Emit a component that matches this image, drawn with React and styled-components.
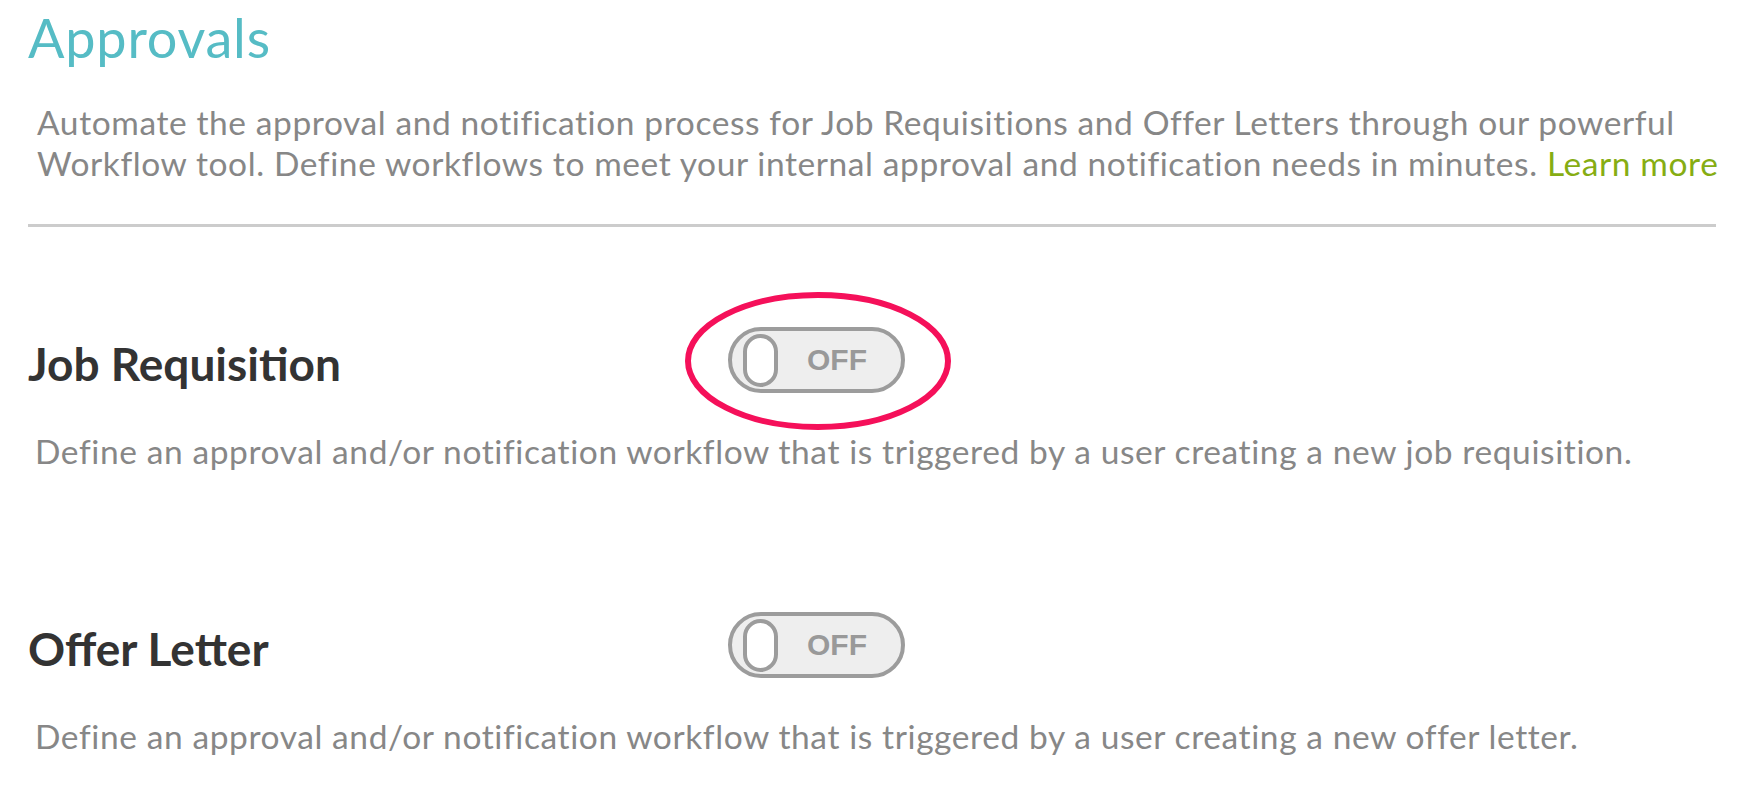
import React from 'react'
import styled, { createGlobalStyle } from 'styled-components'

const GlobalStyle = createGlobalStyle`
  body {
    margin: 0;
    background: #fff;
    font-family: Lato, "Open Sans", sans-serif;
  }
`

const Page = styled.div`
  padding: 0 25px 0 28px;
`

const Title = styled.h1`
  margin: 0;
  padding-top: 8px;
  font-size: 54px;
  line-height: 60px;
  font-weight: 400;
  letter-spacing: 0.8px;
  color: #56bcc5;
`

const Intro = styled.p`
  margin: 34px 0 0;
  padding-left: 9px;
  font-size: 33.5px;
  line-height: 41px;
  letter-spacing: 0.6px;
  color: #878787;
  white-space: nowrap;
`

const LearnMore = styled.a`
  color: #86ad13;
  text-decoration: none;
`

const Divider = styled.hr`
  margin: 40px 0 0;
  border: 0;
  height: 3px;
  background: #cccccc;
`

const Section = styled.section`
  margin-top: ${(p) => p.$top}px;
`

const Row = styled.div`
  display: grid;
  grid-template-columns: 700px auto;
  align-items: center;
`

const Heading = styled.h2`
  margin: 0;
  padding-top: 8px;
  font-size: 46px;
  line-height: 56px;
  font-weight: 700;
  color: #333;
`

const Description = styled.p`
  margin: 38px 0 0;
  padding-left: 7px;
  font-size: 33.5px;
  line-height: 41px;
  letter-spacing: 0.6px;
  color: #878787;
`

const ToggleWrap = styled.div`
  position: relative;
  width: 177px;
`

const Toggle = styled.div`
  box-sizing: border-box;
  width: 177px;
  height: 66px;
  border: 4px solid #9c9c9c;
  border-radius: 33px;
  background: #eeeeee;
  display: flex;
  align-items: center;
  gap: 29px;
  padding-left: 11px;
`

const Knob = styled.div`
  box-sizing: border-box;
  width: 35px;
  height: 53px;
  border: 4px solid #9c9c9c;
  border-radius: 18px;
  background: #fff;
`

const ToggleLabel = styled.span`
  font-family: "Liberation Sans", Arial, sans-serif;
  font-weight: 700;
  font-size: 30px;
  color: #999;
`

const Highlight = styled.svg`
  position: absolute;
  left: -43px;
  top: -35px;
  pointer-events: none;
`

function Switch({ highlighted }) {
  return (
    <ToggleWrap>
      <Toggle>
        <Knob />
        <ToggleLabel>OFF</ToggleLabel>
      </Toggle>
      {highlighted && (
        <Highlight width="266" height="138" viewBox="0 0 266 138">
          <ellipse cx="133" cy="69" rx="130" ry="66" fill="none" stroke="#f5105a" strokeWidth="6" />
        </Highlight>
      )}
    </ToggleWrap>
  )
}

const workflows = [
  { title: 'Job Requisition', text: 'job requisition', top: 100, highlighted: true },
  { title: 'Offer Letter', text: 'offer letter', top: 140, highlighted: false },
]

const App = () => {
  return (
    <Page>
      <GlobalStyle />
      <Title>Approvals</Title>
      <Intro>
        Automate the approval and notification process for Job Requisitions and Offer Letters through our powerful
        <br />
        Workflow tool. Define workflows to meet your internal approval and notification needs in minutes.{' '}
        <LearnMore href="#">Learn more</LearnMore>
      </Intro>
      <Divider />
      {workflows.map((w) => (
        <Section key={w.title} $top={w.top}>
          <Row>
            <Heading>{w.title}</Heading>
            <Switch highlighted={w.highlighted} />
          </Row>
          <Description>
            Define an approval and/or notification workflow that is triggered by a user creating a new {w.text}.
          </Description>
        </Section>
      ))}
    </Page>
  )
}

export default App
